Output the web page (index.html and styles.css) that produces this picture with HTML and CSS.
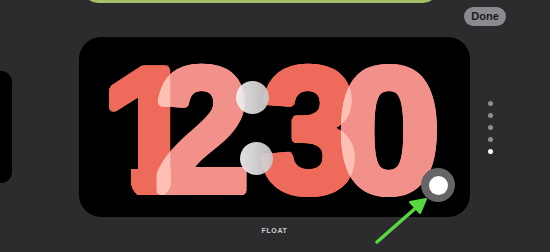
FILE: index.html
```html
<!DOCTYPE html>
<html>
<head>
<meta charset="utf-8">
<link rel="stylesheet" href="styles.css">
</head>
<body>
<div class="screen">
  <div class="top">
    <div class="green-card"></div>
    <button class="done">Done</button>
  </div>
  <div class="row">
    <div class="peek"></div>
    <div class="card">
      <div class="clock">
        <span class="d red d1">1</span>
        <span class="d pink d2">2</span>
        <span class="d red d3">3</span>
        <span class="d pink d4">0</span>
        <span class="colon c1"></span>
        <span class="colon c2"></span>
      </div>
      <div class="knob"><div class="knob-inner"></div></div>
    </div>
    <div class="pager">
      <span class="pdot"></span>
      <span class="pdot"></span>
      <span class="pdot"></span>
      <span class="pdot"></span>
      <span class="pdot on"></span>
    </div>
  </div>
  <div class="label">FLOAT</div>
  <svg class="arrow" width="550" height="252" viewBox="0 0 550 252">
    <line x1="377" y1="242" x2="418" y2="206" stroke="#58d83f" stroke-width="3.5" stroke-linecap="round"/>
    <polygon points="426,199 410,202 420,213" fill="#58d83f" stroke="#58d83f" stroke-width="2" stroke-linejoin="round"/>
  </svg>
</div>
</body>
</html>
```

FILE: styles.css
```css
html, body {
  margin: 0;
  padding: 0;
  background: #2c2c2e;
  overflow: hidden;
}
.screen {
  position: relative;
  width: 550px;
  height: 252px;
  font-family: "Liberation Sans", Arial, sans-serif;
}
.top {
  height: 37px;
  position: relative;
}
.green-card {
  position: absolute;
  left: 83px;
  top: -27px;
  width: 355px;
  height: 30px;
  background: #a7bf66;
  border-radius: 18px;
}
.done {
  position: absolute;
  left: 464px;
  top: 7px;
  width: 42px;
  height: 19px;
  border: none;
  border-radius: 10px;
  background: #8b8b8f;
  color: #1a1a1c;
  font-family: "Liberation Sans", Arial, sans-serif;
  font-weight: 700;
  font-size: 11px;
  padding: 0;
  line-height: 19px;
}
.row {
  display: flex;
  align-items: center;
  height: 180px;
}
.peek {
  width: 12px;
  height: 112px;
  background: #000;
  border-radius: 0 11px 11px 0;
  margin-right: 67px;
}
.card {
  position: relative;
  width: 391px;
  height: 180px;
  background: #000;
  border-radius: 22px;
}
.clock {
  position: absolute;
  inset: 0;
  border-radius: 22px;
  overflow: hidden;
  isolation: isolate;
}
.d {
  position: absolute;
  top: 5px;
  width: 100px;
  text-align: center;
  font-family: "Liberation Sans", Arial, sans-serif;
  font-weight: 700;
  font-size: 176px;
  line-height: 176px;
}
.red {
  color: #ee6b5b;
  text-shadow: 4px 0 0 #ee6b5b, -4px 0 0 #ee6b5b, 0 4px 0 #ee6b5b, 0 -4px 0 #ee6b5b,
    2.8px 2.8px 0 #ee6b5b, -2.8px 2.8px 0 #ee6b5b, 2.8px -2.8px 0 #ee6b5b, -2.8px -2.8px 0 #ee6b5b,
    3.7px 1.5px 0 #ee6b5b, -3.7px 1.5px 0 #ee6b5b, 3.7px -1.5px 0 #ee6b5b, -3.7px -1.5px 0 #ee6b5b,
    1.5px 3.7px 0 #ee6b5b, -1.5px 3.7px 0 #ee6b5b, 1.5px -3.7px 0 #ee6b5b, -1.5px -3.7px 0 #ee6b5b;
}
.pink {
  color: #f2918a;
  mix-blend-mode: screen;
  text-shadow: 4px 0 0 #f2918a, -4px 0 0 #f2918a, 0 4px 0 #f2918a, 0 -4px 0 #f2918a,
    2.8px 2.8px 0 #f2918a, -2.8px 2.8px 0 #f2918a, 2.8px -2.8px 0 #f2918a, -2.8px -2.8px 0 #f2918a,
    3.7px 1.5px 0 #f2918a, -3.7px 1.5px 0 #f2918a, 3.7px -1.5px 0 #f2918a, -3.7px -1.5px 0 #f2918a,
    1.5px 3.7px 0 #f2918a, -1.5px 3.7px 0 #f2918a, 1.5px -3.7px 0 #f2918a, -1.5px -3.7px 0 #f2918a;
}
.d1 {
  left: 21px;
  clip-path: path('M0 0 H100 V124 H71 V138 A20 20 0 0 1 31 138 V124 H0 Z');
}
.d2 { left: 73px; transform: scaleX(0.97); }
.d3 { left: 180px; transform: scaleX(0.98); }
.d4 { left: 260px; transform: scaleX(1.05); }
.colon {
  position: absolute;
  width: 33px;
  height: 33px;
  border-radius: 50%;
  background: linear-gradient(90deg, #f4f1f1, #c8c6c7);
  opacity: 0.93;
}
.c1 { left: 157px; top: 44px; }
.c2 { left: 161px; top: 105px; }
.knob {
  position: absolute;
  left: 342px;
  top: 131px;
  width: 34px;
  height: 34px;
  border-radius: 50%;
  background: #656568;
  display: flex;
  align-items: center;
  justify-content: center;
}
.knob-inner {
  width: 19px;
  height: 19px;
  border-radius: 50%;
  background: #fff;
}
.pager {
  display: flex;
  flex-direction: column;
  gap: 7px;
  margin-left: 18px;
}
.pdot {
  display: block;
  width: 5px;
  height: 5px;
  border-radius: 50%;
  background: #8e8e92;
}
.pdot.on {
  background: #fff;
}
.label {
  width: 391px;
  margin-left: 79px;
  margin-top: 9px;
  text-align: center;
  font-size: 7px;
  font-weight: 700;
  letter-spacing: 0.6px;
  color: #d2d2d4;
  line-height: 10px;
}
.arrow {
  position: absolute;
  left: 0;
  top: 0;
  pointer-events: none;
}
```
